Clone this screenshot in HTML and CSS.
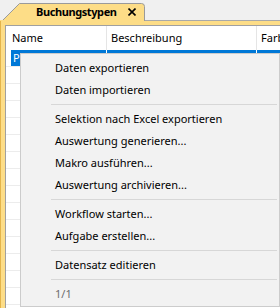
FILE: index.html
```html
<!DOCTYPE html>
<html>
<head>
<meta charset="utf-8">
<link rel="stylesheet" href="styles.css">
</head>
<body>
<div class="tabstrip">
  <div class="tab">
    <svg class="tab-shape" width="150" height="21" viewBox="0 0 150 21">
      <path d="M1 21 L2.5 20.5 L19.5 3.5 L141.5 3.5 Q144.5 3.5 144.5 6.5 L144.5 21 Z" fill="#fddd87" stroke="#9a9a9a" stroke-width="1"/>
      <rect x="0" y="20" width="144" height="1" fill="#fddd87"/>
    </svg>
    <span class="tab-title">Buchungstypen</span>
    <svg class="tab-close" width="8" height="8" viewBox="0 0 8 8">
      <path d="M0.5 0.5 L7.5 7.5 M7.5 0.5 L0.5 7.5" stroke="#000" stroke-width="1.6"/>
    </svg>
  </div>
</div>
<div class="frame">
  <div class="grid">
    <div class="header">
      <div class="hcell c-name">Name</div>
      <div class="hcell c-desc">Beschreibung</div>
      <div class="hcell c-color">Farbe</div>
    </div>
    <div class="row selected">
      <div class="lead"></div>
      <div class="cell c1">P</div>
      <div class="cell c2"></div>
      <div class="cell c3"></div>
    </div>
    <div class="row"></div><div class="row"></div><div class="row"></div><div class="row"></div>
    <div class="row"></div><div class="row"></div><div class="row"></div><div class="row"></div>
    <div class="row"></div><div class="row"></div><div class="row"></div><div class="row"></div>
    <div class="row"></div><div class="row"></div><div class="row"></div>
  </div>
</div>
<div class="menu">
  <div class="item">Daten exportieren</div>
  <div class="item">Daten importieren</div>
  <div class="sep"></div>
  <div class="item">Selektion nach Excel exportieren</div>
  <div class="item">Auswertung generieren...</div>
  <div class="item">Makro ausführen...</div>
  <div class="item">Auswertung archivieren...</div>
  <div class="sep"></div>
  <div class="item">Workflow starten...</div>
  <div class="item">Aufgabe erstellen...</div>
  <div class="sep"></div>
  <div class="item">Datensatz editieren</div>
  <div class="sep"></div>
  <div class="item disabled">1/1</div>
</div>
</body>
</html>
```
FILE: styles.css
```css
html, body {
  margin: 0;
  padding: 0;
}
body {
  width: 280px;
  height: 308px;
  overflow: hidden;
  position: relative;
  background: #f0f0f0;
  font-family: "Noto Sans", "Open Sans", sans-serif;
  font-size: 11px;
  color: #000;
}
.tabstrip {
  height: 20px;
  border-bottom: 1px solid #a9a9a9;
  display: flex;
  align-items: flex-start;
}
.tab {
  position: relative;
  flex: 0 0 146px;
  height: 21px;
  display: flex;
  align-items: center;
}
.tab-shape {
  position: absolute;
  left: 0;
  top: 0;
}
.tab-title {
  position: relative;
  margin-left: 36px;
  padding-top: 2px;
  font-weight: bold;
  letter-spacing: -0.4px;
  line-height: 16px;
  white-space: nowrap;
}
.tab-close {
  position: relative;
  margin-left: auto;
  margin-right: 10px;
  margin-top: 3px;
  flex: 0 0 8px;
}
.frame {
  background: #fddd87;
  border-left: 1px solid #e4b44a;
  padding: 4px 0 0 4px;
  height: 283px;
}
.grid {
  background: #fff;
  border-top: 1px solid #a0a0a0;
  border-left: 1px solid #a0a0a0;
  height: 282px;
  overflow: hidden;
}
.header {
  height: 24px;
  display: grid;
  grid-template-columns: 101px 150px 1fr;
}
.hcell {
  line-height: 24px;
  border-right: 1px solid #e5e5e5;
  white-space: nowrap;
  overflow: hidden;
}
.c-name { padding-left: 6px; }
.c-desc { padding-left: 4px; }
.c-color { padding-left: 4px; border-right: none; }
.row {
  height: 16px;
  border-bottom: 1px solid #ececec;
}
.row.selected {
  display: grid;
  grid-template-columns: 5px 96px 150px 1fr;
}
.cell {
  background: #0078d7;
  color: #fff;
  line-height: 16px;
  border-right: 1px solid #fff;
}
.cell.c1 { padding-left: 2px; }
.cell.c3 { border-right: none; }
.menu {
  position: absolute;
  left: 20px;
  top: 53px;
  width: 258px;
  background: #f2f2f2;
  border: 1px solid #cccccc;
  padding: 3px 0 1px;
}
.item {
  height: 22px;
  line-height: 22px;
  padding-left: 34px;
  white-space: nowrap;
}
.item.disabled {
  color: #6d6d6d;
}
.sep {
  margin: 3px 2px 3px 30px;
  border-top: 1px solid #d7d7d7;
}
```
